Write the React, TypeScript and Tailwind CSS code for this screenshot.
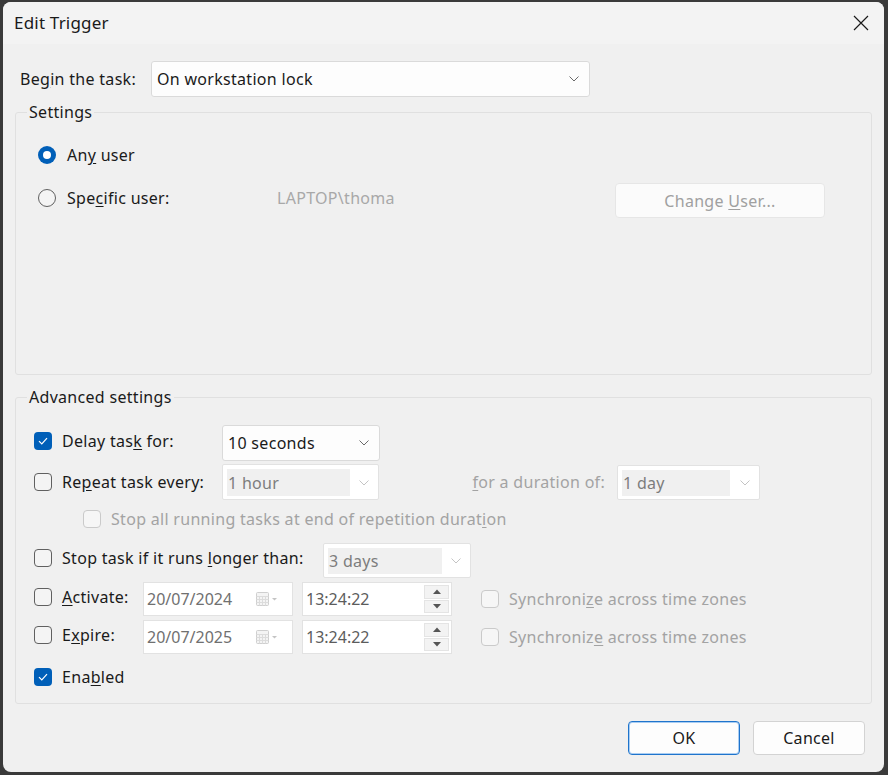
import React from 'react';

function Chevron({ light }: { light?: boolean }) {
  return (
    <svg width="10" height="6" viewBox="0 0 10 6" fill="none">
      <path d="M0.5 0.5 L5 5 L9.5 0.5" stroke={light ? '#c4c4c4' : '#6a6a6a'} strokeWidth="1" />
    </svg>
  );
}

function Check({ checked, disabled }: { checked?: boolean; disabled?: boolean }) {
  if (checked) {
    return (
      <span className="w-[18px] h-[18px] rounded-[4px] bg-[#005fb8] flex items-center justify-center shrink-0">
        <svg width="10" height="8" viewBox="0 0 10 8" fill="none">
          <path d="M1 4.2 L3.8 7 L9 1.2" stroke="white" strokeWidth="1.2" />
        </svg>
      </span>
    );
  }
  return (
    <span
      className={
        disabled
          ? 'w-[18px] h-[18px] rounded-[4px] border border-[#cacaca] bg-[#f6f6f6] shrink-0'
          : 'w-[18px] h-[18px] rounded-[4px] border border-[#606060] bg-[#f4f4f4] shrink-0'
      }
    />
  );
}

function Radio({ checked }: { checked?: boolean }) {
  if (checked) {
    return (
      <span className="w-[18px] h-[18px] rounded-full bg-[#005fb8] flex items-center justify-center shrink-0">
        <span className="w-[8px] h-[8px] rounded-full bg-white" />
      </span>
    );
  }
  return <span className="w-[18px] h-[18px] rounded-full border border-[#606060] bg-[#f4f4f4] shrink-0" />;
}

function Combo({ value, className }: { value: string; className: string }) {
  return (
    <div className={`border border-[#dadada] rounded-[3px] bg-[#fdfdfd] flex items-center pl-[5px] pr-[10px] shrink-0 ${className}`}>
      <span className="flex-1 text-[#1a1a1a]">{value}</span>
      <Chevron />
    </div>
  );
}

function DisabledCombo({ value, className, inner }: { value: string; className: string; inner: string }) {
  return (
    <div className={`border border-[#e2e2e2] rounded-[2px] bg-white flex items-stretch pl-[4px] pt-[4px] pb-[3px] shrink-0 ${className}`}>
      <span className={`bg-[#f0f0f0] text-[#7d7d7d] flex items-center pl-[1px] ${inner}`}>{value}</span>
      <span className="flex-1 flex items-center justify-center">
        <Chevron light />
      </span>
    </div>
  );
}

function DateBox({ value }: { value: string }) {
  return (
    <div className="w-[150px] h-[34px] border border-[#e2e2e2] bg-white flex items-center pl-[3px] pr-[14px] shrink-0">
      <span className="flex-1 text-[#707070] tracking-[0px]">{value}</span>
      <svg width="22" height="14" viewBox="0 0 22 14" fill="none">
        <rect x="0.5" y="0.5" width="12" height="13" rx="1" stroke="#cfcfcf" fill="#f4f4f4" />
        <path d="M0.5 4.5 H12.5 M0.5 7.5 H12.5 M0.5 10.5 H12.5 M3.5 4.5 V13.5 M6.5 4.5 V13.5 M9.5 4.5 V13.5" stroke="#dcdcdc" />
        <path d="M16 6 L18.5 8.5 L21 6 Z" fill="#c4c4c4" />
      </svg>
    </div>
  );
}

function TimeBox({ value }: { value: string }) {
  return (
    <div className="w-[150px] h-[34px] border border-[#e2e2e2] bg-white flex items-center pl-[3px] pr-[2px] py-[2px] shrink-0">
      <span className="flex-1 text-[#5c5c5c] tracking-[0px]">{value}</span>
      <div className="w-[25px] h-full flex flex-col gap-[1px]">
        <span className="flex-1 bg-[#f3f3f3] border border-[#e4e4e4] flex items-center justify-center">
          <svg width="8" height="5" viewBox="0 0 8 5">
            <path d="M0 5 L4 0.5 L8 5 Z" fill="#555" />
          </svg>
        </span>
        <span className="flex-1 bg-[#f3f3f3] border border-[#e4e4e4] flex items-center justify-center">
          <svg width="8" height="5" viewBox="0 0 8 5">
            <path d="M0 0 L4 4.5 L8 0 Z" fill="#555" />
          </svg>
        </span>
      </div>
    </div>
  );
}

function Sync({ under }: { under: 'z' | 'e' }) {
  return (
    <div className="flex items-center ml-[29px] text-[#a3a3a3]">
      <Check disabled />
      <span className="ml-[10px]">
        {under === 'z' ? (
          <>
            Synchroni<u className="underline-offset-2">z</u>e across time zones
          </>
        ) : (
          <>
            Synchroniz<u className="underline-offset-2">e</u> across time zones
          </>
        )}
      </span>
    </div>
  );
}

export default function App() {
  return (
    <div className="w-[888px] h-[775px] bg-[#3a3a3a] pt-[2px] pl-[3px] pr-[4px] pb-[3px] [font-family:'Noto_Sans',sans-serif] text-[16px] tracking-[0.3px] text-[#1a1a1a]">
      <div className="h-full rounded-[8px] bg-[#f0f0f0] flex flex-col overflow-hidden">
        {/* title bar */}
        <div className="h-[42px] bg-[#f3f3f3] flex items-center justify-between pl-[11px] pr-[15px] shrink-0">
          <span className="text-[17px] tracking-[0.2px] text-[#1a1a1a]">Edit Trigger</span>
          <svg width="16" height="16" viewBox="0 0 16 16" fill="none">
            <path d="M1 1 L15 15 M15 1 L1 15" stroke="#1a1a1a" strokeWidth="1.2" />
          </svg>
        </div>

        <div className="px-[12px] flex flex-col">
          {/* begin the task */}
          <div className="mt-[17px] h-[36px] flex items-center pl-[5px]">
            <span className="w-[131px] shrink-0">
              Be<u className="underline-offset-2">g</u>in the task:
            </span>
            <Combo value="On workstation lock" className="w-[439px] h-[36px]" />
          </div>

          {/* settings */}
          <fieldset className="mt-[4px] h-[274px] border border-[#e0e0e0] rounded-[3px]">
            <legend className="ml-[11px] px-[2px] leading-[22px]">Settings</legend>
            <div className="pt-[14px] pl-[22px]">
              <div className="h-[36px] flex items-center">
                <Radio checked />
                <span className="ml-[11px]">
                  An<u className="underline-offset-2">y</u> user
                </span>
              </div>
              <div className="mt-[7px] h-[36px] flex items-center">
                <Radio />
                <span className="ml-[11px] w-[210px] shrink-0">
                  Spe<u className="underline-offset-2">c</u>ific user:
                </span>
                <span className="w-[338px] shrink-0 text-[#a8a8a8]">LAPTOP\thoma</span>
                <div className="w-[210px] h-[35px] mt-[5px] rounded-[4px] border border-[#e6e6e6] bg-[#fbfbfb] flex items-center justify-center text-[#a0a0a0]">
                  <span>
                    Change <u className="underline-offset-2">U</u>ser...
                  </span>
                </div>
              </div>
            </div>
          </fieldset>

          {/* advanced */}
          <fieldset className="mt-[11px] h-[318px] border border-[#e0e0e0] rounded-[3px]">
            <legend className="ml-[11px] px-[2px] leading-[22px]">Advanced settings</legend>
            <div className="pt-[17px] pl-[18px]">
              <div className="h-[36px] flex items-center">
                <div className="w-[188px] flex items-center mb-[5px] shrink-0">
                  <Check checked />
                  <span className="ml-[10px]">
                    Delay tas<u className="underline-offset-2">k</u> for:
                  </span>
                </div>
                <Combo value="10 seconds" className="w-[158px] h-[36px]" />
              </div>

              <div className="mt-[3px] h-[36px] flex items-center">
                <div className="w-[188px] flex items-center mb-[1px] shrink-0">
                  <Check />
                  <span className="ml-[10px]">
                    Re<u className="underline-offset-2">p</u>eat task every:
                  </span>
                </div>
                <DisabledCombo value="1 hour" className="w-[157px] h-[36px]" inner="w-[123px]" />
                <span className="w-[226px] text-right text-[#a3a3a3] shrink-0">
                  <u className="underline-offset-2">f</u>or a duration of:
                </span>
                <DisabledCombo value="1 day" className="ml-[12px] w-[143px] h-[35px]" inner="w-[108px]" />
              </div>

              <div className="mt-[4px] h-[30px] flex items-center pl-[49px] text-[#a3a3a3]">
                <Check disabled />
                <span className="ml-[10px]">
                  Stop all running tasks at end of repetition durat<u className="underline-offset-2">i</u>on
                </span>
              </div>

              <div className="mt-[9px] h-[35px] flex items-center">
                <div className="w-[289px] flex items-center mb-[6px] shrink-0">
                  <Check />
                  <span className="ml-[10px]">
                    Stop task if it runs <u className="underline-offset-2">l</u>onger than:
                  </span>
                </div>
                <DisabledCombo value="3 days" className="w-[148px] h-[35px]" inner="w-[114px]" />
              </div>

              <div className="mt-[4px] h-[34px] flex items-center">
                <div className="w-[109px] flex items-center mb-[5px] shrink-0">
                  <Check />
                  <span className="ml-[10px]">
                    <u className="underline-offset-2">A</u>ctivate:
                  </span>
                </div>
                <DateBox value="20/07/2024" />
                <div className="ml-[9px]">
                  <TimeBox value="13:24:22" />
                </div>
                <Sync under="z" />
              </div>

              <div className="mt-[4px] h-[34px] flex items-center">
                <div className="w-[109px] flex items-center mb-[5px] shrink-0">
                  <Check />
                  <span className="ml-[10px]">
                    E<u className="underline-offset-2">x</u>pire:
                  </span>
                </div>
                <DateBox value="20/07/2025" />
                <div className="ml-[9px]">
                  <TimeBox value="13:24:22" />
                </div>
                <Sync under="e" />
              </div>

              <div className="mt-[8px] h-[30px] flex items-center">
                <Check checked />
                <span className="ml-[10px]">
                  Ena<u className="underline-offset-2">b</u>led
                </span>
              </div>
            </div>
          </fieldset>

          {/* buttons */}
          <div className="mt-[17px] flex justify-end gap-[13px] pr-[7px]">
            <button className="w-[112px] h-[34px] rounded-[4px] border border-[#1f74cc] shadow-[inset_0_0_0_1px_#a9cdf2] bg-[#fdfdfd] text-[#1a1a1a]">
              OK
            </button>
            <button className="w-[112px] h-[34px] rounded-[4px] border border-[#d3d3d3] bg-[#fdfdfd] text-[#1a1a1a]">
              Cancel
            </button>
          </div>
        </div>
      </div>
    </div>
  );
}
